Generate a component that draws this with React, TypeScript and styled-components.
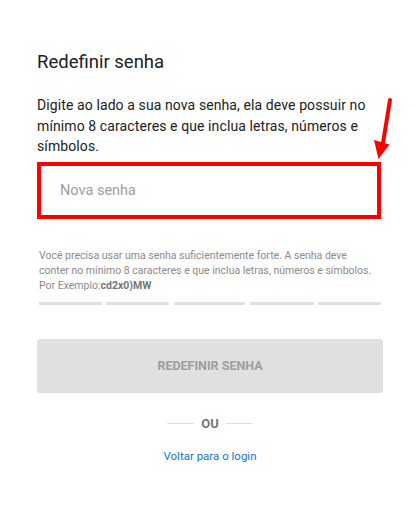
import React from "react";
import styled, { createGlobalStyle } from "styled-components";

const Global = createGlobalStyle`
  html, body { margin: 0; padding: 0; background: #ffffff; }
  body { font-family: Roboto, "Liberation Sans", Arial, sans-serif; }
  * { box-sizing: border-box; }
`;

const Page = styled.div`
  position: relative;
  width: 417px;
  min-height: 511px;
  padding: 50px 34px 0 37px;
  display: flex;
  flex-direction: column;
`;

const Title = styled.h1`
  margin: 0;
  font-size: 18.5px;
  line-height: 24px;
  font-weight: 400;
  color: #212121;
`;

const Intro = styled.p`
  margin: 21px 0 0 0;
  font-size: 14px;
  letter-spacing: 0.1px;
  line-height: 20.5px;
  color: #212121;
`;

const InputBox = styled.div`
  margin-top: 5px;
  width: 344px;
  height: 57px;
  border: 4px solid #ff0000;
  display: flex;
  align-items: center;
  padding-left: 19px;
`;

const Input = styled.input`
  border: none;
  outline: none;
  background: transparent;
  width: 100%;
  font-family: Roboto, "Liberation Sans", Arial, sans-serif;
  font-size: 14.5px;
  color: #212121;
  padding: 0;
  &::placeholder { color: #9e9e9e; }
`;

const Hint = styled.p`
  margin: 29px 0 0 2px;
  width: 336px;
  font-size: 10.5px;
  line-height: 15px;
  color: #8a8a8a;
  strong { font-weight: 700; color: #757575; }
`;

const Strength = styled.div`
  margin: 9px 0 0 2px;
  width: 342px;
  display: flex;
  gap: 4.3px;
`;

const Segment = styled.div<{ $grow: number }>`
  flex: ${(p) => p.$grow} 1 0;
  height: 3px;
  background: #e0e0e0;
`;

const Submit = styled.button`
  margin-top: 34px;
  width: 346px;
  height: 54px;
  border: none;
  border-radius: 3px;
  background: #e0e0e0;
  color: #9e9e9e;
  font-family: Roboto, "Liberation Sans", Arial, sans-serif;
  font-size: 12.5px;
  font-weight: 700;
  text-transform: uppercase;
  cursor: default;
`;

const Divider = styled.div`
  margin-top: 23px;
  width: 346px;
  display: flex;
  align-items: center;
  justify-content: center;
  gap: 7px;
  font-size: 13px;
  line-height: 16px;
  font-weight: 700;
  color: #757575;
`;

const Rule = styled.span`
  width: 27px;
  height: 1px;
  background: #e0e0e0;
`;

const LinkRow = styled.div`
  margin-top: 16px;
  width: 346px;
  text-align: center;
  font-size: 11.5px;
  line-height: 16px;
`;

const Link = styled.a`
  color: #1a73c9;
  text-decoration: none;
`;

const Arrow = styled.svg`
  position: absolute;
  left: 0;
  top: 0;
  pointer-events: none;
`;

const segments = [63, 63, 72, 64, 63];

export default function App() {
  return (
    <>
      <Global />
      <Page>
        <Title>Redefinir senha</Title>
        <Intro>
          Digite ao lado a sua nova senha, ela deve possuir no mínimo 8 caracteres e que inclua letras, números e
          símbolos.
        </Intro>
        <InputBox>
          <Input type="password" placeholder="Nova senha" />
        </InputBox>
        <Hint>
          Você precisa usar uma senha suficientemente forte. A senha deve conter no mínimo 8 caracteres e que inclua
          letras, números e símbolos. Por Exemplo:<strong>cd2x0)MW</strong>
        </Hint>
        <Strength>
          {segments.map((g, i) => (
            <Segment key={i} $grow={g} />
          ))}
        </Strength>
        <Submit type="button">Redefinir senha</Submit>
        <Divider>
          <Rule />
          OU
          <Rule />
        </Divider>
        <LinkRow>
          <Link href="#">Voltar para o login</Link>
        </LinkRow>
        <Arrow width="417" height="511" viewBox="0 0 417 511">
          <line x1="390" y1="100" x2="382.5" y2="146" stroke="#ff0000" strokeWidth="4" strokeLinecap="round" />
          <polygon points="374,140 389.5,144.5 378.5,159" fill="#ff0000" />
        </Arrow>
      </Page>
    </>
  );
}
